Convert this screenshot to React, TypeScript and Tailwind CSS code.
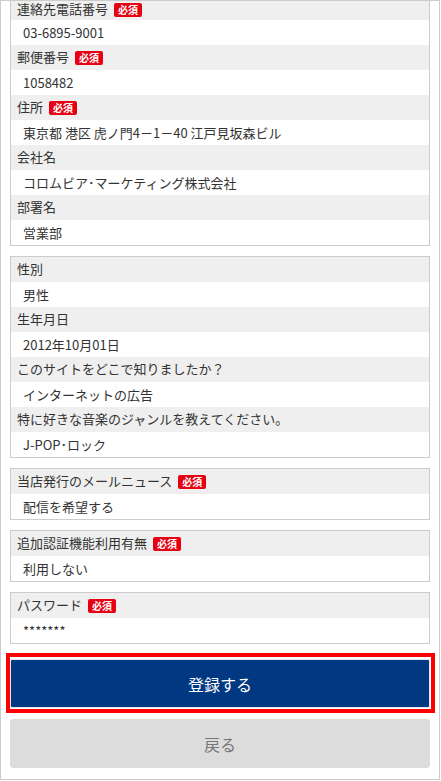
const font = { fontFamily: '"Noto Sans CJK JP", "Noto Sans", sans-serif' }

type Row = { label: string; value: string; required?: boolean }

const groups: Row[][] = [
  [
    { label: "連絡先電話番号", value: "03-6895-9001", required: true },
    { label: "郵便番号", value: "1058482", required: true },
    { label: "住所", value: "東京都 港区 虎ノ門4－1－40 江戸見坂森ビル", required: true },
    { label: "会社名", value: "コロムビア･マーケティング株式会社" },
    { label: "部署名", value: "営業部" },
  ],
  [
    { label: "性別", value: "男性" },
    { label: "生年月日", value: "2012年10月01日" },
    { label: "このサイトをどこで知りましたか？", value: "インターネットの広告" },
    { label: "特に好きな音楽のジャンルを教えてください。", value: "J-POP･ロック" },
  ],
  [{ label: "当店発行のメールニュース", value: "配信を希望する", required: true }],
  [{ label: "追加認証機能利用有無", value: "利用しない", required: true }],
  [{ label: "パスワード", value: "*******", required: true }],
]

function Badge() {
  return (
    <span className="ml-[6px] inline-flex h-[14px] items-center rounded-[2px] bg-[#e60012] px-[4px] text-[10px] font-bold leading-none text-white">
      必須
    </span>
  )
}

function Group({ rows, first }: { rows: Row[]; first?: boolean }) {
  return (
    <div className={`border border-[#cccccc] bg-white ${first ? "-mt-[7px]" : ""}`}>
      {rows.map((r, j) => (
        <div key={r.label}>
          <div
            className={`flex h-[25px] items-center bg-[#efefef] pl-[6px] text-[13px] text-[#333] ${
              first && j === 0 ? "pt-[4px]" : ""
            }`}
          >
            <span className="-mt-[2px]">{r.label}</span>
            {r.required && <Badge />}
          </div>
          <div className="flex h-[25px] items-center pl-[12px] text-[13px] text-[#333]">{r.value}</div>
        </div>
      ))}
    </div>
  )
}

export default function App() {
  return (
    <div className="w-[441px] bg-white" style={font}>
      <div className="w-[440px] overflow-hidden border border-[#cccccc] pl-[9px] pr-[9px] pb-[11px]">
        <div className="flex flex-col gap-[10px]">
          {groups.map((g, i) => (
            <Group key={i} rows={g} first={i === 0} />
          ))}
        </div>
        <div className="mt-[9px] -ml-[4px] -mr-[5px] border-4 border-[#ff0000] pt-[2px] pb-[1px] pl-0 pr-[1px]">
          <button className="flex h-[49px] w-full items-center justify-center rounded-[2px] border border-[#dfe6f0] bg-[#003882] text-[16px] text-white">
            登録する
          </button>
        </div>
        <button className="mt-[6px] flex h-[49px] w-full items-center justify-center rounded-[3px] bg-[#dcdcdc] text-[16px] text-[#777]">
          戻る
        </button>
      </div>
    </div>
  )
}
